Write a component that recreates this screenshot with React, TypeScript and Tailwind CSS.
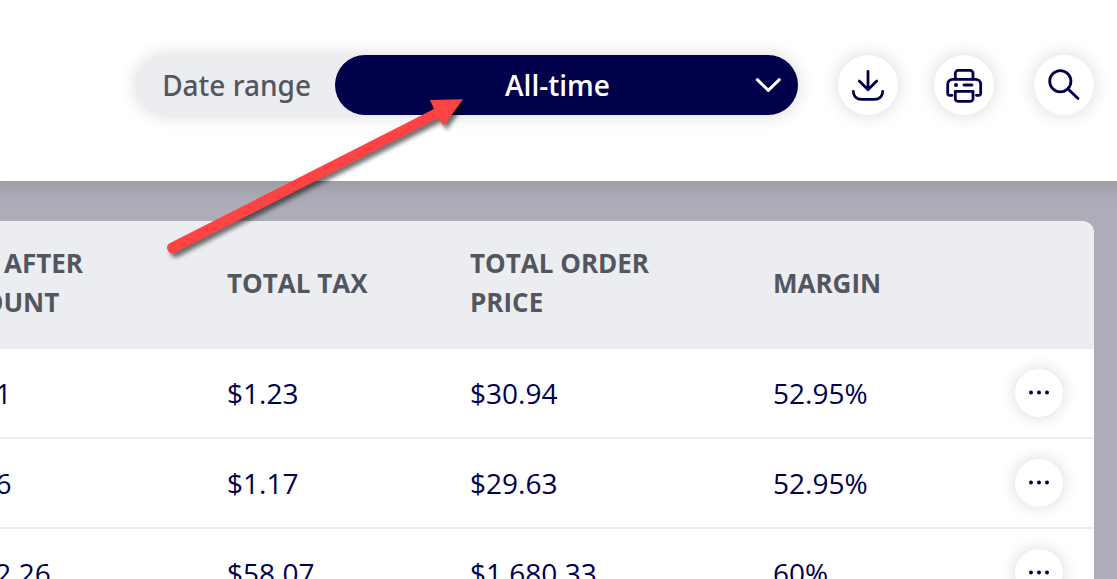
import type { ReactNode } from 'react';

const orders = [
  { afterDiscount: '$29.71', tax: '$1.23', total: '$30.94', margin: '52.95%' },
  { afterDiscount: '$28.46', tax: '$1.17', total: '$29.63', margin: '52.95%' },
  { afterDiscount: '$1,622.26', tax: '$58.07', total: '$1,680.33', margin: '60%' },
];

function IconButton({ label, children }: { label: string; children: ReactNode }) {
  return (
    <button
      type="button"
      aria-label={label}
      className="block size-[60px] shrink-0 rounded-full bg-white shadow-[0_0_18px_rgba(0,0,0,0.16)]"
    >
      <svg
        viewBox="0 0 60 60"
        className="size-full"
        fill="none"
        stroke="currentColor"
        strokeWidth="2.8"
        strokeLinecap="round"
        strokeLinejoin="round"
      >
        {children}
      </svg>
    </button>
  );
}

function DateRange() {
  return (
    <div className="flex h-[60px] items-center rounded-full bg-[#ecedf1] shadow-[0_0_18px_rgba(0,0,0,0.16)]">
      <label htmlFor="date-range" className="pl-[26px] pr-6 font-['Noto_Sans','Open_Sans',sans-serif] font-medium text-[#53565f]">
        Date range
      </label>
      <div className="relative h-full w-[463px]">
        <select
          id="date-range"
          defaultValue="all"
          className="h-full w-full appearance-none rounded-full bg-[#00004b] pr-[18px] text-center font-semibold text-white [text-align-last:center]"
        >
          <option value="all">All-time</option>
          <option value="month">This month</option>
          <option value="week">This week</option>
        </select>
        <svg
          viewBox="0 0 28 16"
          className="pointer-events-none absolute right-4 top-[22px] h-4 w-7"
          fill="none"
          stroke="white"
          strokeWidth="3"
          strokeLinecap="round"
          strokeLinejoin="round"
        >
          <path d="M3.3 2.7 14.3 13.3 25.3 2.7" />
        </svg>
      </div>
    </div>
  );
}

function Toolbar() {
  return (
    <header className="relative z-10 flex justify-end bg-white pb-[66px] pr-[23px] pt-[55px] shadow-[0_-8px_20px_12px_rgba(0,0,0,0.14)]">
      <DateRange />
      <div className="ml-10 flex gap-9">
        <IconButton label="Download">
          <path d="M30 16.5v18M21.3 26l8.7 8.7 8.7-8.7" />
          <path d="M15.3 36.3c0 5 3.2 8 8.4 8h12.6c5.2 0 8.4-3 8.4-8" />
        </IconButton>
        <IconButton label="Print">
          <path d="M21.3 24v-5.7a3 3 0 0 1 3-3H36a3 3 0 0 1 3 3V24" />
          <path d="M18 40.3h-2.3a2 2 0 0 1-2-2v-9a5 5 0 0 1 5-5h23a5 5 0 0 1 5 5v9a2 2 0 0 1-2 2h-2.3" />
          <path d="M21.3 36.3H39v7.5a2.5 2.5 0 0 1-2.5 2.5H23.8a2.5 2.5 0 0 1-2.5-2.5z" />
          <path d="M30 30h8" />
          <circle cx="22" cy="30" r="2" fill="currentColor" stroke="none" />
        </IconButton>
      </div>
      <div className="ml-10">
        <IconButton label="Search">
          <circle cx="26.3" cy="26.2" r="10.6" />
          <path d="M34.3 34.2 44 43.6" />
        </IconButton>
      </div>
    </header>
  );
}

function OrdersTable() {
  return (
    <div className="mr-[23px] mt-10 overflow-hidden rounded-tr-xl bg-white">
      {/* scrolled sideways, so the first column runs off the left edge */}
      <table className="-ml-[100px] w-[calc(100%+100px)] table-fixed border-separate border-spacing-0 text-left">
        <thead className="bg-[#ecedf1] text-[26px] leading-[39px] text-[#53565f]">
          <tr className="h-32">
            <th className="w-[303px] pb-1 pl-6 pr-10 font-bold">PRICE AFTER DISCOUNT</th>
            <th className="w-[243px] pb-1 pl-6 font-bold">TOTAL TAX</th>
            <th className="w-[303px] pb-1 pl-6 pr-10 font-bold">TOTAL ORDER PRICE</th>
            <th className="pb-1 pl-6 font-bold">MARGIN</th>
            <th className="w-[110px]" aria-label="Actions" />
          </tr>
        </thead>
        <tbody className="[&_td]:border-b-2 [&_td]:border-[#ecedf1]">
          {orders.map((order) => (
            <tr key={order.total} className="h-[90px]">
              <td className="pl-6">{order.afterDiscount}</td>
              <td className="pl-6">{order.tax}</td>
              <td className="pl-6">{order.total}</td>
              <td className="pl-6">{order.margin}</td>
              <td className="pl-[31px]">
                <button
                  type="button"
                  aria-label="Row actions"
                  className="block size-12 rounded-full bg-white shadow-[0_0_16px_rgba(0,0,0,0.16)]"
                >
                  <svg viewBox="0 0 48 48" className="size-full" fill="currentColor">
                    <circle cx="16" cy="23.5" r="2" />
                    <circle cx="24" cy="23.5" r="2" />
                    <circle cx="32" cy="23.5" r="2" />
                  </svg>
                </button>
              </td>
            </tr>
          ))}
        </tbody>
      </table>
    </div>
  );
}

function Arrow() {
  return (
    <svg
      viewBox="0 0 320 180"
      className="pointer-events-none absolute left-[155px] top-[90px] z-20 h-[180px] w-80 drop-shadow-[3px_4px_2px_rgba(0,0,0,0.55)]"
      fill="#ff4343"
    >
      <path d="M14.6 153.3 279 19 275 10 308 9.3 288.5 36 283.7 28 19.4 162.9A5.4 5.4 0 0 1 14.6 153.3Z" />
    </svg>
  );
}

export default function App() {
  return (
    <div className="relative h-screen overflow-hidden bg-[#adadb9] font-['Open_Sans','Noto_Sans',sans-serif] text-[28px] text-[#00004b]">
      <Toolbar />
      <OrdersTable />
      <Arrow />
    </div>
  );
}
